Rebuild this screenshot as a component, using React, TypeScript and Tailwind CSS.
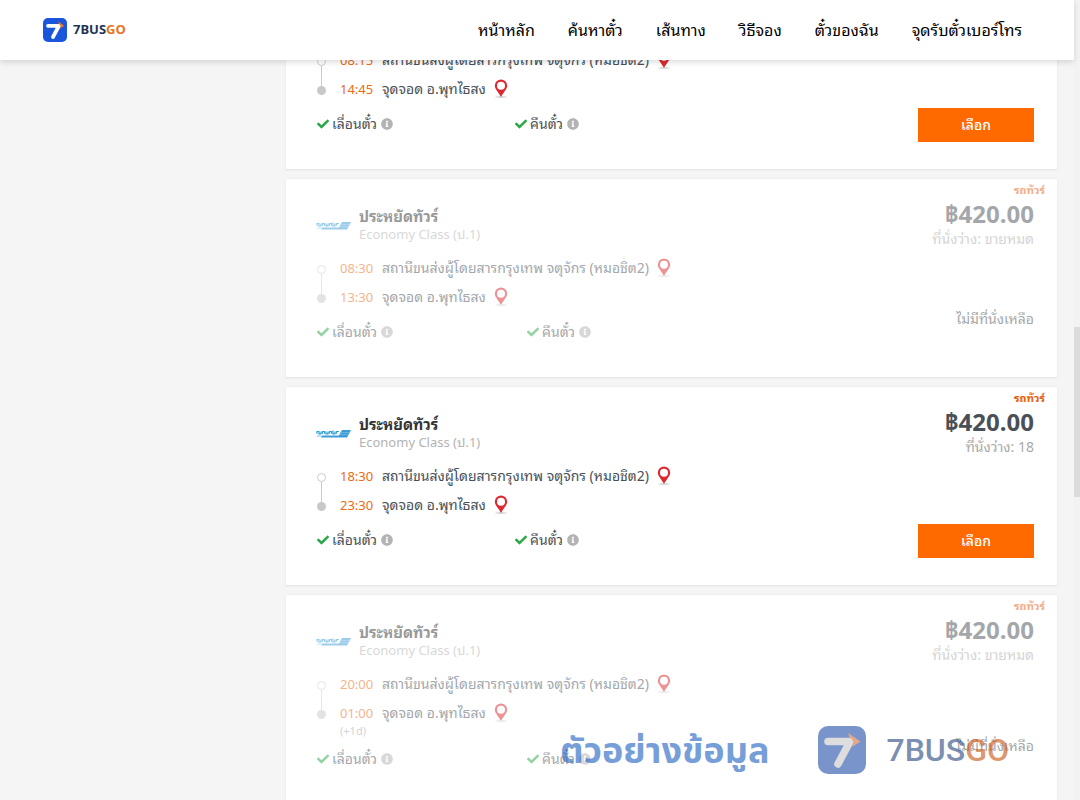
import { FaCheck, FaInfoCircle } from 'react-icons/fa';

type Trip = {
  departs: string;
  arrives: string;
  seats: number;
  nextDay?: boolean;
};

const NAV_ITEMS = ['หน้าหลัก', 'ค้นหาตั๋ว', 'เส้นทาง', 'วิธีจอง', 'ตั๋วของฉัน', 'จุดรับตั๋วเบอร์โทร'];

const TRIPS: Trip[] = [
  { departs: '08:15', arrives: '14:45', seats: 20 },
  { departs: '08:30', arrives: '13:30', seats: 0 },
  { departs: '18:30', arrives: '23:30', seats: 18 },
  { departs: '20:00', arrives: '01:00', seats: 0, nextDay: true },
];

function BrandMark({ className, digit = '#fff', arrow = '#f97316' }: { className: string; digit?: string; arrow?: string }) {
  return (
    <svg viewBox="0 0 48 48" className={className} aria-hidden="true">
      <rect width="48" height="48" rx="10" fill="currentColor" />
      <path d="M10 15.500h22L20 38" fill="none" stroke={digit} strokeWidth="7.500" strokeLinecap="round" strokeLinejoin="round" />
      <path d="M30 7l12.500 8.500L34 21c2.500-4 1.500-7.500-2.500-9.500z" fill={arrow} />
    </svg>
  );
}

function OperatorLogo() {
  return (
    <svg viewBox="0 0 36 10" className="mt-[2px] h-[10px] w-9" aria-hidden="true">
      <path d="M26 1h9l-4 7.500H5l1-2h17z" fill="#3d9bd8" />
      <path d="M24 3.500h10M24 5.500h9" stroke="#85c5ea" strokeWidth=".6" />
      <path
        d="M1 4.800V2.500h2v2.300h2V2.500M6.500 4.800V2.500h2v2.300M10 2.500v2.300h2V2.500M13.500 4.800V2.500h2v2.300M17 1.500v3.300h2V2.500M20.500 4.800V2.500h2.500"
        fill="none"
        stroke="#2f9fd6"
        strokeWidth="1.200"
      />
      <path d="M1 7h4" stroke="#a9d8ef" strokeWidth="1.500" />
    </svg>
  );
}

function MapPin() {
  return (
    <svg viewBox="0 0 14 20" className="h-5 w-[14px] shrink-0" aria-hidden="true">
      <ellipse cx="7" cy="18" rx="6" ry="1.200" fill="#ddd" />
      <path
        fillRule="evenodd"
        d="M7 .5a6.200 6.200 0 0 0-6.200 6.200c0 3.400 3.700 6.500 6.200 11.200 2.500-4.700 6.200-7.800 6.200-11.200a6.200 6.200 0 0 0-6.200-6.200zm0 2.200a4 4 0 1 1 0 8 4 4 0 0 1 0-8z"
        fill="#dc2a30"
      />
    </svg>
  );
}

function Feature({ label }: { label: string }) {
  return (
    <div className="flex items-center text-sm leading-5">
      <FaCheck className="mr-[3px] size-3 text-[#28a745]" />
      <span>{label}</span>
      <FaInfoCircle className="ml-1 size-3 text-[#b3b3b3]" />
    </div>
  );
}

function TripCard({ trip }: { trip: Trip }) {
  const soldOut = trip.seats === 0;

  return (
    <article className="border-b border-[#e6e6e6] bg-white shadow-[0_0_2px_rgba(0,0,0,0.08)]">
      <div className={`relative flex justify-between pl-[30px] pr-[23px] ${soldOut ? 'opacity-50' : ''}`}>
        <span className="absolute right-3 top-1 text-[11px] font-bold leading-[14px] text-[#e8600a]">รถทัวร์</span>

        <div className="pb-[35px] pt-7">
          <div className="flex items-center">
            <OperatorLogo />
            <div className="ml-[7px] leading-[18px]">
              <h2 className="text-[15px] font-bold leading-[18px] text-[#333]">ประหยัดทัวร์</h2>
              <p className="text-[#b3b3b3]">Economy Class (ป.1)</p>
            </div>
          </div>

          <div className="mt-[13px] flex">
            <div className="flex w-[11px] flex-col items-center pb-[6px] pt-[9px]">
              <span className="size-[9px] shrink-0 rounded-full border border-[#ccc]" />
              <span className="h-5 w-px bg-[#ccc]" />
              <span className="size-[9px] shrink-0 rounded-full bg-[#c8c8c8]" />
            </div>
            <div className="ml-[13px]">
              <div className="flex items-center leading-6">
                <time className="w-[42px] text-[#ed6b13]">{trip.departs}</time>
                <span className="text-sm leading-6">สถานีขนส่งผู้โดยสารกรุงเทพ จตุจักร (หมอชิต2)</span>
                <span className="ml-2"><MapPin /></span>
              </div>
              <div className="mt-[5px] flex items-center leading-6">
                <time className="w-[42px] text-[#ed6b13]">{trip.arrives}</time>
                <span className="text-sm leading-6">จุดจอด อ.พุทไธสง</span>
                <span className="ml-2"><MapPin /></span>
              </div>
              {trip.nextDay && <p className="text-[11px] leading-[11px] text-[#aaa]">(+1d)</p>}
            </div>
          </div>

          <div className={`mt-[13px] grid pl-px ${soldOut ? 'grid-cols-[210px_210px]' : 'grid-cols-[198px_198px]'}`}>
            <Feature label="เลื่อนตั๋ว" />
            <Feature label="คืนตั๋ว" />
          </div>
        </div>

        <div className="flex flex-col items-end pt-5">
          <p className="text-2xl font-bold leading-[30px]">฿420.00</p>
          <p className="text-sm leading-5 text-[#aaa]">ที่นั่งว่าง: {soldOut ? 'ขายหมด' : trip.seats}</p>
          {soldOut ? (
            <p className="mb-12 mt-auto text-sm leading-5">ไม่มีที่นั่งเหลือ</p>
          ) : (
            <button className="mb-[27px] mt-auto h-[34px] w-[116px] bg-[#ff6a00] text-sm font-medium text-white">เลือก</button>
          )}
        </div>
      </div>
    </article>
  );
}

export default function App() {
  return (
    <div className="relative flex h-screen overflow-hidden bg-[#f5f5f5] font-['Noto_Sans','Noto_Sans_Thai_Looped','Loma','Waree','Tahoma',sans-serif] text-[13px] text-[#495057]">
      <div className="min-w-0 flex-1">
        <header className="relative z-10 flex h-[60px] items-center justify-between bg-white pl-[43px] pr-[52px] shadow-[0_2px_6px_rgba(0,0,0,0.15)]">
          <a href="#" className="flex items-center gap-[6px] text-[13px] font-bold text-[#1e3354]">
            <BrandMark className="size-6 text-[#1a56db]" />
            <span>7BUS<span className="text-[#ea7423]">GO</span></span>
          </a>
          <nav className="flex gap-[33px] text-base text-black">
            {NAV_ITEMS.map((item) => (
              <a key={item} href="#">{item}</a>
            ))}
          </nav>
        </header>

        {/* list is scrolled, so the first trip starts above the header */}
        <main className="-mt-[89px] flex">
          <aside className="w-[286px] shrink-0" />
          <section className="mr-[17px] flex flex-1 flex-col gap-[9px]">
            {TRIPS.map((trip) => (
              <TripCard key={trip.departs} trip={trip} />
            ))}
          </section>
        </main>
      </div>

      <div className="w-[6px] shrink-0 bg-[#f3f3f3] pt-[327px]">
        <div className="h-[170px] bg-[#dcdcdc]" />
      </div>

      <div className="pointer-events-none absolute bottom-[26px] right-[71px] z-20 flex h-12 items-center opacity-60">
        <span className="font-['Noto_Sans','Noto_Sans_Thai',sans-serif] text-4xl font-bold text-[#1c5fc0]">ตัวอย่างข้อมูล</span>
        <BrandMark className="ml-[49px] size-12 text-[#214daa]" digit="#c8c8c8" arrow="#d07038" />
        <span className="ml-5 font-['Roboto',sans-serif] text-[32px] font-medium text-[#25457f]">
          7BUS<span className="text-[#c9530f]">GO</span>
        </span>
      </div>
    </div>
  );
}
